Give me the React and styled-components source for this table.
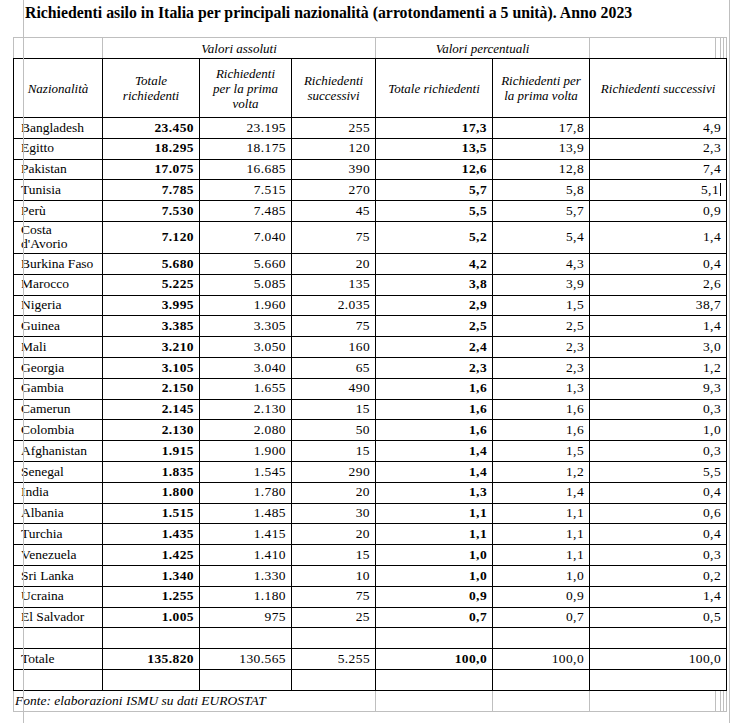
import styled, { createGlobalStyle } from "styled-components";

const GlobalStyle = createGlobalStyle`
  html, body {
    margin: 0;
    padding: 0;
    background: #ffffff;
  }
  body {
    font-family: "Liberation Serif", "Times New Roman", serif;
    color: #000000;
  }
`;

const GRAY = "#bfbfbf";

const rows = [
  ["Bangladesh", "23.450", "23.195", "255", "17,3", "17,8", "4,9"],
  ["Egitto", "18.295", "18.175", "120", "13,5", "13,9", "2,3"],
  ["Pakistan", "17.075", "16.685", "390", "12,6", "12,8", "7,4"],
  ["Tunisia", "7.785", "7.515", "270", "5,7", "5,8", "5,1"],
  ["Perù", "7.530", "7.485", "45", "5,5", "5,7", "0,9"],
  ["Costa d'Avorio", "7.120", "7.040", "75", "5,2", "5,4", "1,4"],
  ["Burkina Faso", "5.680", "5.660", "20", "4,2", "4,3", "0,4"],
  ["Marocco", "5.225", "5.085", "135", "3,8", "3,9", "2,6"],
  ["Nigeria", "3.995", "1.960", "2.035", "2,9", "1,5", "38,7"],
  ["Guinea", "3.385", "3.305", "75", "2,5", "2,5", "1,4"],
  ["Mali", "3.210", "3.050", "160", "2,4", "2,3", "3,0"],
  ["Georgia", "3.105", "3.040", "65", "2,3", "2,3", "1,2"],
  ["Gambia", "2.150", "1.655", "490", "1,6", "1,3", "9,3"],
  ["Camerun", "2.145", "2.130", "15", "1,6", "1,6", "0,3"],
  ["Colombia", "2.130", "2.080", "50", "1,6", "1,6", "1,0"],
  ["Afghanistan", "1.915", "1.900", "15", "1,4", "1,5", "0,3"],
  ["Senegal", "1.835", "1.545", "290", "1,4", "1,2", "5,5"],
  ["India", "1.800", "1.780", "20", "1,3", "1,4", "0,4"],
  ["Albania", "1.515", "1.485", "30", "1,1", "1,1", "0,6"],
  ["Turchia", "1.435", "1.415", "20", "1,1", "1,1", "0,4"],
  ["Venezuela", "1.425", "1.410", "15", "1,0", "1,1", "0,3"],
  ["Sri Lanka", "1.340", "1.330", "10", "1,0", "1,0", "0,2"],
  ["Ucraina", "1.255", "1.180", "75", "0,9", "0,9", "1,4"],
  ["El Salvador", "1.005", "975", "25", "0,7", "0,7", "0,5"],
];

const totals = ["Totale", "135.820", "130.565", "5.255", "100,0", "100,0", "100,0"];

const colWidths = [89, 97, 92, 84, 117, 97, 126, 5, 3, 3];

const Page = styled.div`
  position: relative;
  width: 736px;
  height: 723px;
  overflow: hidden;
`;

// word processor text boundary guides, drawn over the page
const Guide = styled.div`
  position: absolute;
  top: 0;
  bottom: 0;
  left: ${(p) => p.$x}px;
  width: 1px;
  background: ${GRAY};
  pointer-events: none;
`;

const Title = styled.h1`
  margin: 0;
  padding: 3px 0 0 25px;
  height: 37px;
  box-sizing: border-box;
  font-size: 15.8px;
  line-height: 20px;
  font-weight: 700;
`;

const Table = styled.table`
  margin-left: 13px;
  width: 714px;
  table-layout: fixed;
  border-collapse: collapse;
  font-size: 13.5px;
`;

const GroupRow = styled.tr`
  height: 21px;
`;

const GroupCell = styled.td`
  padding: 0 4px;
  border: 1px solid ${GRAY};
  border-bottom: 1px solid #000;
  font-style: italic;
  font-size: 13px;
  line-height: 15px;
  text-align: center;
  vertical-align: middle;
`;

const HeadRow = styled.tr`
  height: 59px;
`;

const HeadCell = styled.th`
  padding: 0 3px;
  border: 1px solid #000;
  font-style: italic;
  font-weight: 400;
  font-size: 13px;
  line-height: 15px;
  text-align: center;
  vertical-align: middle;
`;

const Row = styled.tr`
  height: 20.8px;
`;

const Cell = styled.td`
  padding: 1px 5px 1px ${(p) => (p.$first ? "7px" : "5px")};
  border: 1px solid #000;
  font-weight: ${(p) => (p.$bold ? 700 : 400)};
  text-align: ${(p) => (p.$first ? "left" : "right")};
  letter-spacing: ${(p) => (p.$first ? "0" : "0.4px")};
  line-height: 14.5px;
  vertical-align: middle;
  white-space: nowrap;
`;

const NoteRow = styled.tr`
  height: 21px;
`;

const NoteCell = styled.td`
  padding: 0 1px;
  border: 1px solid ${GRAY};
  border-top: 1px solid #000;
  font-style: italic;
  font-size: 13.5px;
  line-height: 15px;
  vertical-align: middle;
  white-space: nowrap;
`;

const Caret = styled.span`
  display: inline-block;
  width: 1px;
  height: 13px;
  margin-left: 1px;
  background: #000;
  vertical-align: -2px;
`;

const Stubs = ({ Comp }) => (
  <>
    <Comp />
    <Comp />
    <Comp />
  </>
);

const DataRow = ({ cells, caret }) => (
  <Row>
    {cells.map((value, i) => (
      <Cell
        key={i}
        $first={i === 0}
        $bold={i === 1 || i === 4}
        colSpan={i === 6 ? 4 : 1}
      >
        {i === 0 && value === "Costa d'Avorio" ? (
          <>
            Costa
            <br />
            d'Avorio
          </>
        ) : (
          value
        )}
        {i === 6 && caret && <Caret />}
      </Cell>
    ))}
  </Row>
);

const EmptyRow = () => (
  <Row>
    {[0, 1, 2, 3, 4, 5].map((i) => (
      <Cell key={i} $first={i === 0} />
    ))}
    <Cell colSpan={4} />
  </Row>
);

export default function App() {
  return (
    <>
      <GlobalStyle />
      <Page>
        <Title>
          Richiedenti asilo in Italia per principali nazionalità (arrotondamenti a 5 unità). Anno 2023
        </Title>
        <Table>
          <colgroup>
            {colWidths.map((w, i) => (
              <col key={i} style={{ width: w }} />
            ))}
          </colgroup>
          <tbody>
            <GroupRow>
              <GroupCell />
              <GroupCell colSpan={3}>Valori assoluti</GroupCell>
              <GroupCell colSpan={2}>Valori percentuali</GroupCell>
              <GroupCell />
              <Stubs Comp={GroupCell} />
            </GroupRow>
            <HeadRow>
              <HeadCell>Nazionalità</HeadCell>
              <HeadCell>
                Totale
                <br />
                richiedenti
              </HeadCell>
              <HeadCell>
                Richiedenti
                <br />
                per la prima
                <br />
                volta
              </HeadCell>
              <HeadCell>
                Richiedenti
                <br />
                successivi
              </HeadCell>
              <HeadCell>Totale richiedenti</HeadCell>
              <HeadCell>
                Richiedenti per
                <br />
                la prima volta
              </HeadCell>
              <HeadCell colSpan={4}>Richiedenti successivi</HeadCell>
            </HeadRow>
            {rows.map((r) => (
              <DataRow key={r[0]} cells={r} caret={r[0] === "Tunisia"} />
            ))}
            <EmptyRow />
            <DataRow cells={totals} />
            <EmptyRow />
            <NoteRow>
              <NoteCell colSpan={4}>Fonte: elaborazioni ISMU su dati EUROSTAT</NoteCell>
              <NoteCell />
              <NoteCell />
              <NoteCell />
              <Stubs Comp={NoteCell} />
            </NoteRow>
          </tbody>
        </Table>
        <Guide $x={23} />
        <Guide $x={729} />
      </Page>
    </>
  );
}
